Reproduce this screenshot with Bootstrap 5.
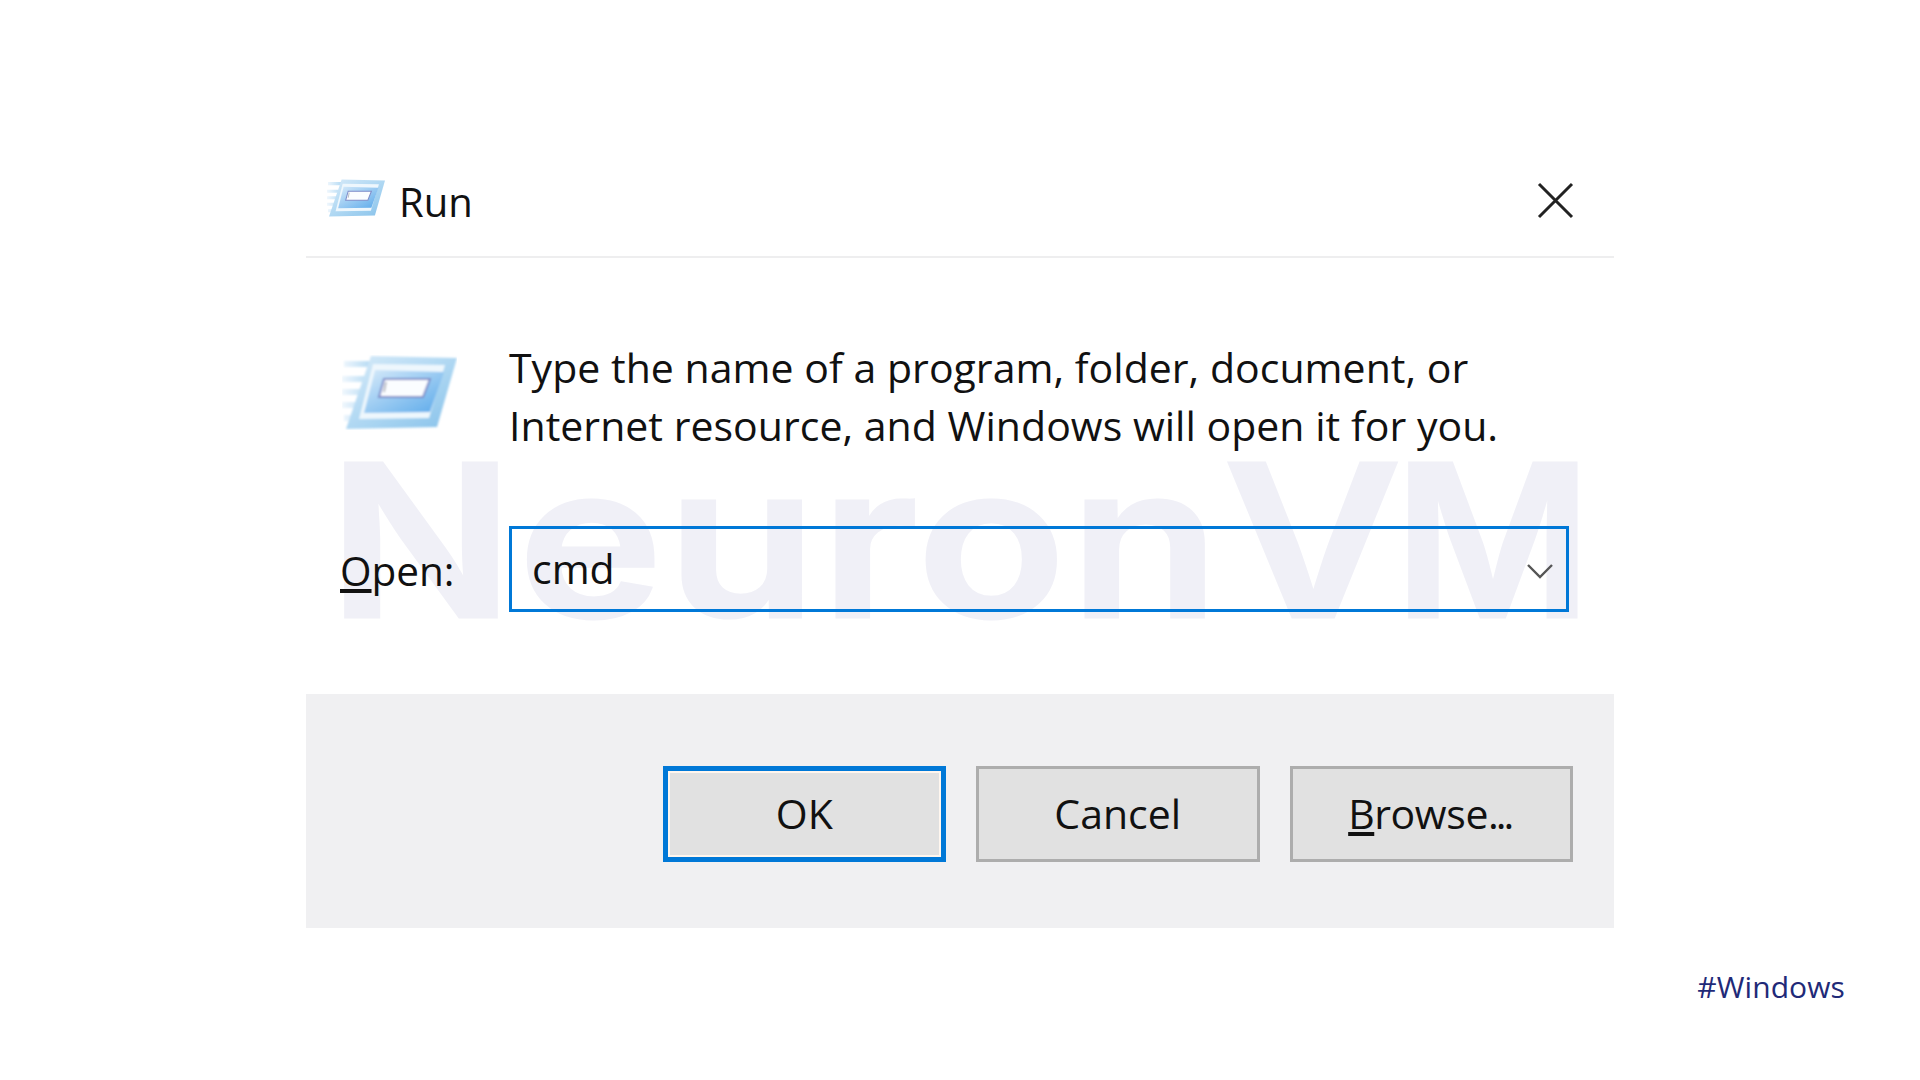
<!DOCTYPE html>
<html lang="en">
<head>
<meta charset="utf-8">
<title>Run</title>
<link href="https://cdn.jsdelivr.net/npm/bootstrap@5.3.0/dist/css/bootstrap.min.css" rel="stylesheet">
<style>
html,body{height:100%;background:#fff;}
body{font-family:"Open Sans","Noto Sans","Liberation Sans",sans-serif;color:#111;overflow:hidden;}
.sprite{width:0;height:0;}
.stage{padding:140px 0 0 306px;height:1080px;}
.rundlg{width:1308px;}
.dlg-head{height:118px;padding:0 40px 0 21px;border-bottom:2px solid #eeeeef;}
.dlg-title{font-size:40px;margin-left:14px;line-height:1;padding-top:8px;}
.smallico{width:58px;height:38px;}
.closeico{margin-top:5px;}
.bigico{width:115px;height:75px;margin:17px 0 0 2px;}
.dlg-main{height:436px;padding:80px 45px 0 34px;}
.dlg-text{font-size:41px;line-height:58px;margin-left:52px;white-space:nowrap;letter-spacing:.03px;}
.open-row{margin-top:72px;}
.open-label{width:169px;font-size:40.5px;line-height:1;flex:none;padding-top:4px;}
.field-wrap{width:1062px;}
.cmd-input.form-control{height:86px;border:3.5px solid #0078d7;border-radius:0;background:transparent;font-size:41px;padding:0 20px 3px;color:#111;font-family:inherit;box-shadow:none;}
.chev{right:15px;top:37px;width:28px;height:16px;}
.wmark{left:22px;top:176px;font-family:Inter,"Open Sans",sans-serif;font-size:212px;font-weight:600;line-height:1;color:#f0f0f7;-webkit-text-stroke:3px #f0f0f7;white-space:nowrap;pointer-events:none;transform:scaleX(1.155);transform-origin:left center;letter-spacing:3.5px;}
.wm-v{letter-spacing:-7px;}
.wm-m{display:inline-block;transform:scaleX(.875);transform-origin:left center;}
.dlg-foot{height:234px;background:#f0f0f2;padding:72px 41px 0 0;gap:30px;}
.wbtn.btn{width:283.5px;height:96px;border-radius:0;background:#e1e1e1;border:3px solid #adadad;font-size:41px;color:#111;padding:0 0 2px;line-height:1;font-family:inherit;}
.wbtn.primary-btn.btn{border:5px solid #0078d7;box-shadow:inset 0 0 0 2px #fff6ee;}
.tightdots{letter-spacing:-3px;}
.browse-label{letter-spacing:-.4px;margin-left:-3px;}
.hashtag{margin:44px 0 0 0;padding-right:75px;text-align:right;font-size:30px;line-height:1;color:#1f2a78;letter-spacing:.1px;}
</style>
</head>
<body>
<svg class="sprite position-absolute" aria-hidden="true">
  <defs>
    <linearGradient id="g1" x1="0" y1="0" x2="1" y2="1"><stop offset="0" stop-color="#d8ebf9"/><stop offset=".55" stop-color="#acd6f2"/><stop offset="1" stop-color="#86c1ea"/></linearGradient>
    <linearGradient id="g2" x1="0" y1="0" x2="1" y2="1"><stop offset="0" stop-color="#d8ebfa"/><stop offset="1" stop-color="#5aa9ea"/></linearGradient>
    <linearGradient id="g3" x1="0" y1="0" x2="1" y2="0"><stop offset="0" stop-color="#f0f7fd"/><stop offset="1" stop-color="#b8dcf4"/></linearGradient>
    <filter id="soft" x="-5%" y="-5%" width="110%" height="110%"><feGaussianBlur stdDeviation="1"/></filter>
    <symbol id="runico" viewBox="0 0 115 75">
      <g filter="url(#soft)">
        <path d="M2 9H28M0 24H22M0 37H18M0 50H14M2 63H10" stroke="url(#g3)" stroke-width="6" fill="none"/>
        <path d="M29 1L115 3L95 72L4 74Z" fill="url(#g1)"/>
        <path d="M31 9L103 10L87 63L17 64Z" fill="#eef7fd"/>
        <path d="M33 15L102 17L88 57L22 58Z" fill="url(#g2)"/>
        <path d="M42 24L88 24L81 42L37 42Z" fill="#fbfdff" stroke="#7f8cc8" stroke-width="2"/>
        <path d="M44 27L42 37" stroke="#9a9faa" stroke-width="1.4"/>
      </g>
    </symbol>
  </defs>
</svg>
<div class="stage">
  <div class="rundlg">
    <div class="dlg-head d-flex align-items-center">
      <svg class="smallico flex-shrink-0" aria-hidden="true"><use href="#runico"/></svg>
      <div class="dlg-title">Run</div>
      <svg class="closeico ms-auto" width="37" height="37" viewBox="0 0 37 37" aria-label="Close"><path d="M2 2L35 35M35 2L2 35" stroke="#222" stroke-width="3"/></svg>
    </div>
    <div class="dlg-main position-relative">
      <div class="wmark position-absolute">Neuron<span class="wm-v">V</span><span class="wm-m">M</span></div>
      <div class="d-flex position-relative">
        <svg class="bigico flex-shrink-0" aria-hidden="true"><use href="#runico"/></svg>
        <div class="dlg-text">Type the name of a program, folder, document, or<br>Internet resource, and Windows will open it for you.</div>
      </div>
      <div class="open-row d-flex align-items-center position-relative">
        <label class="open-label" for="cmdbox"><u>O</u>pen:</label>
        <div class="field-wrap position-relative">
          <input id="cmdbox" class="form-control cmd-input" type="text" value="cmd">
          <svg class="chev position-absolute" viewBox="0 0 28 16" aria-hidden="true"><path d="M2 2L14 14L26 2" fill="none" stroke="#555" stroke-width="2.4"/></svg>
        </div>
      </div>
    </div>
    <div class="dlg-foot d-flex justify-content-end align-items-start">
      <button type="button" class="btn wbtn primary-btn">OK</button>
      <button type="button" class="btn wbtn">Cancel</button>
      <button type="button" class="btn wbtn"><span class="browse-label"><u>B</u>rowse<span class="tightdots">...</span></span></button>
    </div>
  </div>
  <p class="hashtag">#Windows</p>
</div>
</body>
</html>
